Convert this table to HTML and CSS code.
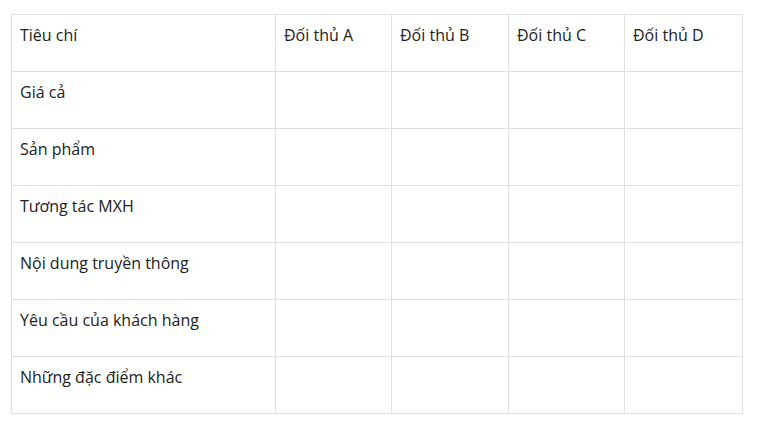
FILE: index.html
```html
<!DOCTYPE html>
<html lang="vi">
<head>
<meta charset="utf-8">
<link rel="stylesheet" href="styles.css">
</head>
<body>
<table class="compare">
  <colgroup>
    <col class="c-main"><col class="c-a"><col class="c-b"><col class="c-c"><col class="c-d">
  </colgroup>
  <tr><td>Tiêu chí</td><td>Đối thủ A</td><td>Đối thủ B</td><td>Đối thủ C</td><td>Đối thủ D</td></tr>
  <tr><td>Giá cả</td><td></td><td></td><td></td><td></td></tr>
  <tr><td>Sản phẩm</td><td></td><td></td><td></td><td></td></tr>
  <tr><td>Tương tác MXH</td><td></td><td></td><td></td><td></td></tr>
  <tr><td>Nội dung truyền thông</td><td></td><td></td><td></td><td></td></tr>
  <tr><td>Yêu cầu của khách hàng</td><td></td><td></td><td></td><td></td></tr>
  <tr><td>Những đặc điểm khác</td><td></td><td></td><td></td><td></td></tr>
</table>
</body>
</html>
```
FILE: styles.css
```css
html, body {
  margin: 0;
  background: #fff;
}
body {
  padding: 14px 0 0 11px;
  font-family: "Open Sans", "Noto Sans", sans-serif;
  font-size: 16px;
  color: #222;
}
.compare {
  border-collapse: collapse;
  table-layout: fixed;
  width: 731px;
}
.c-main { width: 264px; }
.c-a { width: 116px; }
.c-b { width: 117px; }
.c-c { width: 116px; }
.c-d { width: 118px; }
.compare td {
  border: 1px solid #e0e0e0;
  height: 56px;
  box-sizing: border-box;
  padding: 8px 8px;
  vertical-align: top;
  line-height: 24px;
}
.compare tr { height: 57px; }
```
